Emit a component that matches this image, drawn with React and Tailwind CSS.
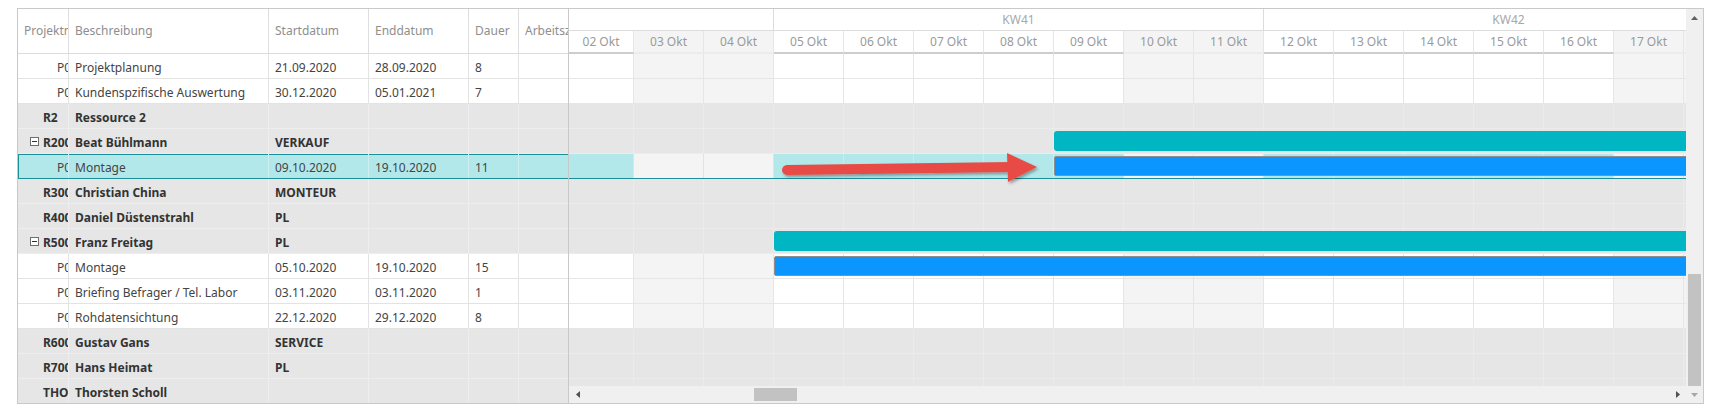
import React from 'react'

// 02 Okt is only partly scrolled into view, the rest are full 70px days
const days = [
  { label: '02 Okt', w: 'w-[65px]', off: false },
  { label: '03 Okt', w: 'w-[70px]', off: true },
  { label: '04 Okt', w: 'w-[70px]', off: true },
  { label: '05 Okt', w: 'w-[70px]', off: false },
  { label: '06 Okt', w: 'w-[70px]', off: false },
  { label: '07 Okt', w: 'w-[70px]', off: false },
  { label: '08 Okt', w: 'w-[70px]', off: false },
  { label: '09 Okt', w: 'w-[70px]', off: false },
  { label: '10 Okt', w: 'w-[70px]', off: true },
  { label: '11 Okt', w: 'w-[70px]', off: true },
  { label: '12 Okt', w: 'w-[70px]', off: false },
  { label: '13 Okt', w: 'w-[70px]', off: false },
  { label: '14 Okt', w: 'w-[70px]', off: false },
  { label: '15 Okt', w: 'w-[70px]', off: false },
  { label: '16 Okt', w: 'w-[70px]', off: false },
  { label: '17 Okt', w: 'w-[70px]', off: true },
  { label: '18 Okt', w: 'w-[70px]', off: true },
]

const weeks = [
  { label: '', w: 'w-[205px]' },
  { label: 'KW41', w: 'w-[490px]' },
  { label: 'KW42', w: 'w-[490px]' },
]

const dayLeft = (i) => (i === 0 ? 0 : 65 + 70 * (i - 1))

const rows = [
  { type: 'task', id: 'P00041', desc: 'Projektplanung', start: '21.09.2020', end: '28.09.2020', dur: '8' },
  { type: 'task', id: 'P00057', desc: 'Kundenspzifische Auswertung', start: '30.12.2020', end: '05.01.2021', dur: '7' },
  { type: 'res', id: 'R2', desc: 'Ressource 2' },
  { type: 'res', id: 'R2000', desc: 'Beat Bühlmann', start: 'VERKAUF', open: true, bar: { kind: 'sum', from: 7 } },
  { type: 'task', id: 'P00063', desc: 'Montage', start: '09.10.2020', end: '19.10.2020', dur: '11', selected: true, bar: { kind: 'task', from: 7 } },
  { type: 'res', id: 'R3000', desc: 'Christian China', start: 'MONTEUR' },
  { type: 'res', id: 'R4000', desc: 'Daniel Düstenstrahl', start: 'PL' },
  { type: 'res', id: 'R5000', desc: 'Franz Freitag', start: 'PL', open: true, bar: { kind: 'sum', from: 3 } },
  { type: 'task', id: 'P00064', desc: 'Montage', start: '05.10.2020', end: '19.10.2020', dur: '15', bar: { kind: 'task', from: 3 } },
  { type: 'task', id: 'P00071', desc: 'Briefing Befrager / Tel. Labor', start: '03.11.2020', end: '03.11.2020', dur: '1' },
  { type: 'task', id: 'P00072', desc: 'Rohdatensichtung', start: '22.12.2020', end: '29.12.2020', dur: '8' },
  { type: 'res', id: 'R6000', desc: 'Gustav Gans', start: 'SERVICE' },
  { type: 'res', id: 'R7000', desc: 'Hans Heimat', start: 'PL' },
  { type: 'res', id: 'THOSC', desc: 'Thorsten Scholl' },
]

const columns = [
  { key: 'id', label: 'Projektnummer', w: 'w-[51px]' },
  { key: 'desc', label: 'Beschreibung', w: 'w-[200px]' },
  { key: 'start', label: 'Startdatum', w: 'w-[100px]' },
  { key: 'end', label: 'Enddatum', w: 'w-[100px]' },
  { key: 'dur', label: 'Dauer', w: 'w-[50px]' },
  { key: 'work', label: 'Arbeitszeit', w: 'w-[49px]' },
]

function MinusBox() {
  return (
    <span className="flex items-center justify-center w-[9px] h-[9px] -mt-[3px] border border-[#6e6e6e] bg-white shrink-0">
      <span className="block w-[5px] h-px bg-[#333]" />
    </span>
  )
}

function GridRow({ row, last }) {
  const res = row.type === 'res'
  let rowCls = 'bg-white text-[#444] border-[#e3e3e3]'
  let cellBorder = 'border-[#e3e3e3]'
  if (res) {
    rowCls = 'bg-[#e6e6e6] text-[#333] font-bold border-[#eeeeee]'
    cellBorder = 'border-[#eeeeee]'
  }
  if (row.selected) {
    rowCls = 'bg-[#b3e8eb] text-[#444] border-[#1b8e98] shadow-[inset_0_1px_0_#1b8e98,inset_1px_0_0_#1b8e98]'
    cellBorder = 'border-[#cdeff1]'
  }
  const cell = `flex items-center pt-[3px] shrink-0 overflow-hidden whitespace-nowrap border-r ${cellBorder}`
  return (
    <div className={`flex h-[25px] shrink-0 ${last ? '' : 'border-b'} ${rowCls}`}>
      <div className={`${cell} w-[51px] ${res ? (row.open ? 'pl-[12px]' : 'pl-[25px]') : 'pl-[39px]'}`}>
        {row.open && <MinusBox />}
        <span className={row.open ? 'ml-[4px]' : ''}>{row.id}</span>
      </div>
      <div className={`${cell} w-[200px] pl-[6px]`}>{row.desc}</div>
      <div className={`${cell} w-[100px] pl-[6px]`}>{row.start}</div>
      <div className={`${cell} w-[100px] pl-[6px]`}>{row.end}</div>
      <div className={`${cell} w-[50px] pl-[6px]`}>{row.dur}</div>
      <div className="w-[49px] shrink-0" />
    </div>
  )
}

function TimelineRow({ row }) {
  const res = row.type === 'res'
  return (
    <div
      className={`relative flex h-[25px] shrink-0 border-b ${
        row.selected
          ? 'border-[#1b8e98] shadow-[inset_0_1px_0_#1b8e98]'
          : res
          ? 'border-[#ececec]'
          : 'border-[#e6e6e6]'
      }`}
    >
      {days.map((d) => {
        let bg = d.off ? 'bg-[#f4f4f4] border-[#e6e6e6]' : 'bg-white border-[#e6e6e6]'
        if (res) bg = 'bg-[#e6e6e6] border-[#ebebeb]'
        if (row.selected) bg = d.off ? 'bg-[#f4f4f4] border-[#c5eef0]' : 'bg-[#b3e8eb] border-[#c5eef0]'
        return <div key={d.label} className={`h-full shrink-0 border-r ${d.w} ${bg}`} />
      })}
      {row.bar && row.bar.kind === 'sum' && (
        <div
          className="absolute top-[2px] h-[20px] w-[1200px] rounded-[3px] bg-[#00b6c2]"
          style={{ left: dayLeft(row.bar.from) }}
        />
      )}
      {row.bar && row.bar.kind === 'task' && (
        <div
          className="absolute top-[2px] h-[20px] w-[1200px] rounded-[2px] bg-[#0b96ff] border border-[#8e8e8e]"
          style={{ left: dayLeft(row.bar.from) }}
        />
      )}
    </div>
  )
}

function Tri({ dir, color }) {
  const pts = {
    up: '0,4 7,4 3.5,0',
    down: '0,0 7,0 3.5,4',
    left: '4,0 4,7 0,3.5',
    right: '0,0 0,7 4,3.5',
  }[dir]
  const vertical = dir === 'up' || dir === 'down'
  return (
    <svg width={vertical ? 7 : 4} height={vertical ? 4 : 7} viewBox={vertical ? '0 0 7 4' : '0 0 4 7'}>
      <polygon points={pts} fill={color} />
    </svg>
  )
}

export default function App() {
  return (
    <div className="relative w-[1713px] h-[410px] bg-white pl-[17px] pt-[8px] font-['Noto_Sans',sans-serif] text-[12px] leading-none">
      <div className="flex w-[1687px] h-[396px] border border-[#c9c9c9]">
        {/* left grid */}
        <div className="flex flex-col w-[550px] shrink-0 overflow-hidden">
          <div className="flex h-[45px] shrink-0 border-b border-[#dcdcdc] text-[#8e8e8e]">
            {columns.map((c, i) => (
              <div
                key={c.key}
                className={`flex items-center ${c.w} shrink-0 overflow-hidden whitespace-nowrap pl-[6px] ${
                  i < columns.length - 1 ? 'border-r border-[#dedede]' : ''
                }`}
              >
                {c.label}
              </div>
            ))}
          </div>
          {rows.map((r, i) => (
            <GridRow key={i} row={r} last={i === rows.length - 1} />
          ))}
        </div>

        <div className="w-px shrink-0 bg-[#c9c9c9]" />

        {/* timeline */}
        <div className="flex flex-col w-[1117px] shrink-0 overflow-hidden">
          <div className="flex h-[22px] shrink-0 border-b border-[#dcdcdc] text-[#a8a8a8]">
            {weeks.map((w, i) => (
              <div key={i} className={`flex items-center justify-center shrink-0 ${w.w} border-r border-[#dcdcdc]`}>
                {w.label}
              </div>
            ))}
          </div>
          <div className="flex h-[23px] shrink-0 text-[#9a9a9a]">
            {days.map((d) => (
              <div
                key={d.label}
                className={`flex items-center justify-center shrink-0 whitespace-nowrap ${d.w} border-r border-b-2 ${
                  d.off ? 'bg-[#f4f4f4] border-r-[#e6e6e6] border-b-[#ececec]' : 'border-r-[#e6e6e6] border-b-[#cdcdcd]'
                }`}
              >
                {d.label}
              </div>
            ))}
          </div>
          <div className="flex flex-col h-[332px] shrink-0 overflow-hidden">
            {rows.map((r, i) => (
              <TimelineRow key={i} row={r} />
            ))}
          </div>
          <div className="flex items-center h-[17px] shrink-0 bg-[#f0f0f0]">
            <div className="flex items-center justify-center w-[17px] h-full">
              <Tri dir="left" color="#505050" />
            </div>
            <div className="flex items-center flex-1 h-full">
              <div className="ml-[168px] w-[43px] h-[13px] bg-[#c2c2c2]" />
            </div>
            <div className="flex items-center justify-center w-[17px] h-full">
              <Tri dir="right" color="#505050" />
            </div>
          </div>
        </div>

        {/* vertical scrollbar */}
        <div className="flex flex-col w-[17px] shrink-0 bg-[#f0f0f0]">
          <div className="flex items-center justify-center h-[17px]">
            <Tri dir="up" color="#606060" />
          </div>
          <div className="flex flex-col flex-1 items-center">
            <div className="mt-auto w-[13px] h-[112px] bg-[#c2c2c2]" />
          </div>
          <div className="flex items-center justify-center h-[17px]">
            <Tri dir="down" color="#a8a8a8" />
          </div>
        </div>
      </div>

      {/* red pointer arrow over the selected row */}
      <svg className="absolute left-0 top-0 pointer-events-none" width="1713" height="410">
        <defs>
          <filter id="arrowShadow" x="-10%" y="-50%" width="120%" height="200%">
            <feDropShadow dx="1.5" dy="2" stdDeviation="1.5" floodColor="#000" floodOpacity="0.35" />
          </filter>
        </defs>
        <g filter="url(#arrowShadow)" fill="#e84c45" stroke="none">
          <line x1="787" y1="170" x2="1012" y2="167" stroke="#e84c45" strokeWidth="10" strokeLinecap="round" />
          <polygon points="1007,153 1037,167 1008,182" />
        </g>
      </svg>
    </div>
  )
}
